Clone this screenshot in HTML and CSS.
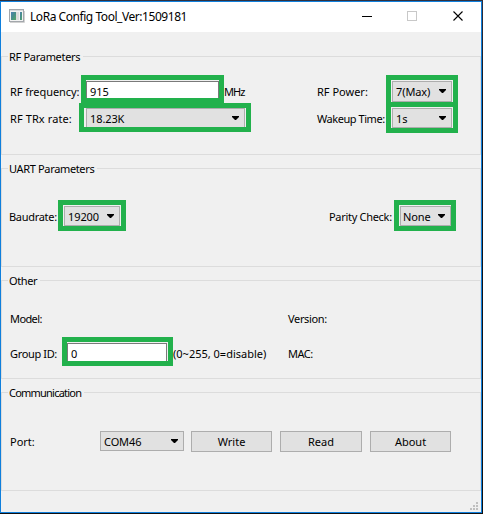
FILE: index.html
```html
<!DOCTYPE html>
<html lang="en">
<head>
<meta charset="utf-8">
<title>LoRa Config Tool_Ver:1509181</title>
<link rel="stylesheet" href="styles.css">
</head>
<body>
<div class="window">
  <header class="titlebar">
    <svg class="app-icon" width="16" height="14" viewBox="0 0 16 14">
      <defs><linearGradient id="scene" x1="0" y1="0" x2="1" y2="1"><stop offset="0" stop-color="#4d80b4"/><stop offset=".5" stop-color="#488f88"/><stop offset="1" stop-color="#58a866"/></linearGradient></defs>
      <rect x=".5" y=".5" width="14" height="12" fill="#f3f3f3" stroke="#a3a7ac"/>
      <path d="M1 1.5h13" stroke="#d6d9dc"/>
      <path d="M2 3h5v8H2z" fill="url(#scene)"/>
      <path d="M7 3h3v8H7z" fill="#dcdcdc"/>
      <path d="M11 3h2v8h-2z" fill="url(#scene)"/>
      <path d="M1 13.5h14.5V2" fill="none" stroke="#d2d2d2"/>
    </svg>
    <h1 class="title"><span>LoRa Config Tool_Ver:1509181</span></h1>
    <svg class="controls" width="104" height="12" viewBox="0 0 104 12" fill="none">
      <path d="M0 6.5h10" stroke="#000"/>
      <rect x="45.5" y="1.5" width="9" height="9" stroke="#c8c8c8"/>
      <path d="M91.5 1.5l9 9M100.5 1.5l-9 9" stroke="#000" stroke-width="1.1"/>
    </svg>
  </header>

  <section class="group">
    <h2 class="legend w-rf">RF Parameters</h2>
    <div class="rf-grid">
      <div class="left-col">
        <div class="row row-freq">
          <span class="label l-freq">RF frequency:</span>
          <div class="mark mark-freq"><div class="input">915</div></div>
          <span class="label l-mhz">MHz</span>
        </div>
        <div class="row row-rate">
          <span class="label l-rate">RF TRx rate:</span>
          <div class="mark mark-rate"><div class="select">18.23K<i class="arrow"></i></div></div>
        </div>
      </div>
      <div class="mid-col">
        <span class="label l-power">RF Power:</span>
        <span class="label l-wake">Wakeup Time:</span>
      </div>
      <div class="right-col">
        <div class="mark mark-power"><div class="select">7(Max)<i class="arrow"></i></div></div>
        <div class="mark mark-wake"><div class="select">1s<i class="arrow"></i></div></div>
      </div>
    </div>
  </section>

  <section class="group">
    <h2 class="legend w-uart">UART Parameters</h2>
    <div class="row row-uart">
      <span class="label l-baud">Baudrate:</span>
      <div class="mark mark-baud"><div class="select">19200<i class="arrow"></i></div></div>
      <span class="label l-parity">Parity Check:</span>
      <div class="mark mark-parity"><div class="select">None<i class="arrow"></i></div></div>
    </div>
  </section>

  <section class="group">
    <h2 class="legend w-other">Other</h2>
    <div class="row row-model">
      <span class="label l-model">Model:</span>
      <span class="label l-version">Version:</span>
    </div>
    <div class="row row-id">
      <span class="label l-id">Group ID:</span>
      <div class="mark mark-id"><div class="input">0</div></div>
      <span class="label l-range">(0~255, 0=disable)</span>
      <span class="label l-mac">MAC:</span>
    </div>
  </section>

  <section class="group">
    <h2 class="legend w-comm">Communication</h2>
    <div class="row row-port">
      <span class="label l-port">Port:</span>
      <div class="select port">COM46<i class="arrow"></i></div>
      <div class="button b-write">Write</div>
      <div class="button b-read">Read</div>
      <div class="button b-about">About</div>
    </div>
  </section>

  <footer class="status">
    <svg width="8" height="8" fill="#bfbfbf"><path d="M6 0h2v2H6zM3 3h2v2H3zM6 3h2v2H6zM0 6h2v2H0zM3 6h2v2H3zM6 6h2v2H6z"/></svg>
  </footer>
</div>
</body>
</html>
```
FILE: styles.css
```css
* { box-sizing: border-box; }
body {
  margin: 0;
  width: 483px;
  height: 514px;
  padding: 1px 1px 1px 0;
  overflow: hidden;
  background: linear-gradient(#30313f, #10151f 20%, #101010);
  font: 11px/16px "Noto Sans", sans-serif;
  color: #000;
}
.window {
  width: 482px;
  height: 512px;
  border: 1px solid #0f7fdc;
  background: #f0f0f0;
}
.titlebar {
  display: flex;
  height: 30px;
  padding: 7px 0 0 8px;
  background: #fff;
}
.app-icon { display: block; }
.title {
  width: 332px;
  margin: 0 0 0 5px;
  font-size: 12px;
  font-weight: 400;
  line-height: 16px;
  letter-spacing: -0.45px;
  white-space: nowrap;
}
.controls { display: block; margin-top: 1px; }
.group {
  height: 99px;
  margin: 24px 0 0;
  border: 1px solid #dcdcdc;
}
.group + .group { margin-top: 13px; }
.legend {
  height: 16px;
  margin: -8px 0 0 6px;
  padding-left: 1px;
  background: #f0f0f0;
  font-size: 11px;
  font-weight: 400;
  line-height: 16px;
  white-space: nowrap;
}
.w-rf { width: 75px; letter-spacing: -0.3px; }
.w-uart { width: 89px; letter-spacing: -0.35px; }
.w-other { width: 32px; letter-spacing: -0.4px; }
.w-comm { width: 76px; letter-spacing: -0.78px; }
.row { display: flex; }
.label { flex: none; white-space: nowrap; }
.mark { flex: none; border: 5px solid #22b14c; background: #f0f0f0; }
.input {
  height: 100%;
  padding-left: 3px;
  border: solid #7a7a7a;
  border-width: 1px 1px 0;
  background: #fff;
  line-height: 19px;
}
.select {
  display: flex;
  justify-content: space-between;
  height: 100%;
  padding: 0 5px 0 3px;
  border: 1px solid #adadad;
  background: #e1e1e1;
  letter-spacing: -0.1px;
  line-height: 20px;
  white-space: nowrap;
}
.arrow {
  width: 7px;
  height: 4px;
  margin-top: 7px;
  background: #000;
  clip-path: polygon(0 0, 100% 0, 100% 1px, 4px 100%, 3px 100%, 0 1px);
}
.rf-grid {
  display: grid;
  grid-template-columns: 314px 70px 72px;
  margin-top: 10px;
}
.row-freq { height: 28px; padding-left: 8px; }
.l-freq { width: 71px; margin-top: 9px; letter-spacing: -0.05px; }
.mark-freq { width: 143px; height: 28px; padding-top: 1px; }
.l-mhz { margin-top: 9px; letter-spacing: -0.9px; }
.row-rate { padding-left: 8px; }
.l-rate { width: 69px; margin-top: 8px; letter-spacing: 0.1px; }
.mark-rate { width: 172px; height: 29px; padding: 0 1px 0 2px; }
.mark-rate .select { border-bottom: 0; line-height: 19px; }
.mid-col { display: flex; flex-direction: column; padding: 9px 0 0 1px; gap: 11px; }
.l-wake { letter-spacing: -0.45px; }
.right-col { display: flex; flex-direction: column; }
.mark-power { height: 32px; padding: 1px 1px 0; }
.mark-wake { height: 26px; border-top: 0; padding: 1px 1px 0; }
.row-uart { margin-top: 23px; padding-left: 7px; }
.l-baud { width: 49px; margin-top: 9px; letter-spacing: -0.3px; }
.mark-baud { width: 68px; height: 31px; padding: 1px 1px 0; }
.l-parity { width: 65px; margin: 9px 0 0 203px; letter-spacing: -0.3px; }
.mark-parity { width: 62px; height: 31px; padding: 1px 0 0 1px; }
.mark-parity .select { padding-left: 2px; }
.row-model { margin-top: 22px; padding-left: 8px; }
.l-model { width: 278px; letter-spacing: -0.6px; }
.l-version { letter-spacing: -0.35px; }
.row-id { margin-top: 10px; padding-left: 8px; }
.l-id { width: 52px; margin-top: 9px; letter-spacing: -0.35px; }
.mark-id { width: 111px; height: 29px; padding: 1px 1px 0 0; }
.l-range { width: 115px; margin-top: 9px; letter-spacing: 0; }
.l-mac { margin-top: 9px; letter-spacing: -0.5px; }
.row-port { margin-top: 30px; padding-left: 8px; }
.l-port { width: 90px; margin-top: 3px; }
.port { width: 84px; height: 20px; }
.button {
  height: 21px;
  margin-left: 8px;
  border: 1px solid #adadad;
  background: #e1e1e1;
  line-height: 20px;
  text-align: center;
}
.b-write { width: 81px; margin-left: 7px; }
.b-read { width: 82px; }
.b-about { width: 81px; }
.status { display: flex; justify-content: flex-end; padding: 11px 3px 0 0; }
```
